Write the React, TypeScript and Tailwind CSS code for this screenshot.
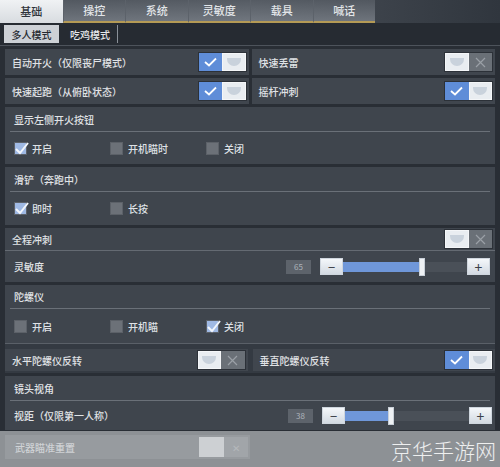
import React from 'react';

const font = { fontFamily: '"Noto Sans CJK SC", "Noto Sans", sans-serif' };

function Toggle({ on, faded }: { on: boolean; faded?: boolean }) {
  return (
    <div className={`flex h-[20px] w-[49px] border border-[#2c3138] ${faded ? 'opacity-40' : ''}`}>
      {on ? (
        <>
          <div className="flex w-1/2 items-center justify-center bg-[#5f8dd8]">
            <svg width="13" height="10" viewBox="0 0 13 10">
              <path d="M1 5 L5 8.5 L12 1.5" fill="none" stroke="#fff" strokeWidth="1.8" />
            </svg>
          </div>
          <Knob />
        </>
      ) : (
        <>
          <Knob />
          <div className="flex w-1/2 items-center justify-center bg-[#6a7077]">
            <svg width="11" height="11" viewBox="0 0 11 11">
              <path d="M1 1 L10 10 M10 1 L1 10" stroke="#9aa0a6" strokeWidth="1.2" />
            </svg>
          </div>
        </>
      )}
    </div>
  );
}

function Knob() {
  return (
    <div className="flex w-1/2 items-center justify-center border border-[#f4f6f8] bg-[#e9edf1]">
      <div className="h-[8px] w-[14px] rounded-b-full bg-[#c9d2dc]" />
    </div>
  );
}

function Check({ on, label }: { on: boolean; label: string }) {
  return (
    <div className="flex w-[96px] items-center gap-[5px] pl-[9px]">
      <div className="relative h-[13px] w-[13px] border border-[#5c6168] bg-[#6c7178]">
        {on && (
          <>
            <div className="absolute inset-0 bg-[#9fb9e4]" />
            <svg className="absolute -left-[1px] -top-[2px]" width="16" height="15" viewBox="0 0 16 15">
              <path d="M2 8 L6 12 L14 2" fill="none" stroke="#f2f6fc" strokeWidth="2" />
            </svg>
          </>
        )}
      </div>
      <span className="text-[10px] font-medium text-[#dfe2e6]">{label}</span>
    </div>
  );
}

function ToggleCell({ label, on }: { label: string; on: boolean }) {
  return (
    <div className="flex flex-1 items-center justify-between bg-[#40464e] pl-[7px] pr-[2px]">
      <span className="text-[10px] font-medium text-[#e0e3e6]">{label}</span>
      <Toggle on={on} />
    </div>
  );
}

function Slider({ value, pct }: { value: number; pct: number }) {
  return (
    <div className="flex items-center">
      <div className="mr-[9px] flex h-[14px] w-[25px] items-center justify-center bg-[#5d636b] text-[8px] text-[#aeb4bb]">
        {value}
      </div>
      <div className="flex h-[17px] w-[23px] items-center justify-center border border-[#cfd6de] bg-gradient-to-b from-[#f4f7fa] to-[#d3dae2] text-[13px] leading-none text-[#3b4048]">
        −
      </div>
      <div className="relative h-[10px] w-[124px] bg-[#4a5058]">
        <div className="absolute inset-y-0 left-0 bg-[#6f97d9]" style={{ width: `${pct}%` }} />
        <div
          className="absolute -top-[4px] h-[18px] w-[6px] border border-[#c9d0d8] bg-[#eef1f4]"
          style={{ left: `calc(${pct}% - 3px)` }}
        />
      </div>
      <div className="flex h-[17px] w-[23px] items-center justify-center border border-[#cfd6de] bg-gradient-to-b from-[#f4f7fa] to-[#d3dae2] text-[14px] leading-none text-[#3b4048]">
        +
      </div>
    </div>
  );
}

function Line() {
  return <div className="mx-[5px] h-px bg-[#6a7078]" />;
}

export default function App() {
  const tabs = ['基础', '操控', '系统', '灵敏度', '载具', '喊话'];
  return (
    <div className="relative h-[467px] w-[500px] overflow-hidden bg-[#292e35]" style={font}>
      {/* top tabs */}
      <div className="flex h-[23px] bg-gradient-to-r from-[#3d434b] via-[#4a5058] to-[#30363e]">
        {tabs.map((t, i) => (
          <div
            key={t}
            className={`flex w-[62.5px] items-center justify-center text-[11px] font-medium ${
              i === 0
                ? 'bg-gradient-to-b from-[#f0f2f4] to-[#d8dce0] text-[#2e333a]'
                : 'border-b-2 border-l border-[#b49a55] border-l-[#5c626a] bg-gradient-to-b from-[#5a6068]/70 to-[#7a8088]/80 text-[#e2e5e8]'
            }`}
          >
            {t}
          </div>
        ))}
      </div>

      {/* sub tabs */}
      <div className="flex h-[23px] items-center gap-[4px] border-b border-[#4d535b] bg-[#262b32] pl-[4px]">
        <div className="flex h-[18px] w-[55px] items-center justify-center bg-[#cdd1d6] text-[10px] font-medium text-[#262a30]">
          多人模式
        </div>
        <div className="flex h-[18px] w-[55px] items-center justify-center border-r border-[#8a9098] text-[10px] font-medium text-[#e6e8eb]">
          吃鸡模式
        </div>
      </div>

      <div className="flex flex-col gap-[3px] px-[5px] pt-[3px]">
        <div className="flex h-[26px] gap-[3px]">
          <ToggleCell label="自动开火（仅限丧尸模式）" on />
          <ToggleCell label="快速丢雷" on={false} />
        </div>
        <div className="flex h-[26px] gap-[3px]">
          <ToggleCell label="快速起跑（从俯卧状态）" on />
          <ToggleCell label="摇杆冲刺" on />
        </div>

        <div className="bg-[#3f454d]">
          <div className="flex h-[24px] items-center pl-[9px] text-[10px] font-medium text-[#e0e3e6]">显示左侧开火按钮</div>
          <Line />
          <div className="flex h-[32px] items-center">
            <Check on label="开启" />
            <Check on={false} label="开机瞄时" />
            <Check on={false} label="关闭" />
          </div>
        </div>

        <div className="bg-[#3f454d]">
          <div className="flex h-[24px] items-center pl-[9px] text-[10px] font-medium text-[#e0e3e6]">滑铲（奔跑中）</div>
          <Line />
          <div className="flex h-[33px] items-center">
            <Check on label="即时" />
            <Check on={false} label="长按" />
          </div>
        </div>

        <div className="bg-[#3f454d]">
          <div className="flex h-[22px] items-center justify-between pl-[7px] pr-[2px]">
            <span className="text-[10px] font-medium text-[#e0e3e6]">全程冲刺</span>
            <Toggle on={false} />
          </div>
          <div className="h-px bg-[#646a72]" />
          <div className="flex h-[31px] items-center justify-between pl-[9px] pr-[5px]">
            <span className="text-[10px] font-medium text-[#e0e3e6]">灵敏度</span>
            <Slider value={65} pct={64} />
          </div>
        </div>

        <div className="bg-[#3f454d]">
          <div className="flex h-[23px] items-center pl-[9px] text-[10px] font-medium text-[#e0e3e6]">陀螺仪</div>
          <Line />
          <div className="flex h-[34px] items-center">
            <Check on={false} label="开启" />
            <Check on={false} label="开机瞄" />
            <Check on label="关闭" />
          </div>
          <div className="h-px bg-[#5a6068]" />
          <div className="flex h-[29px] gap-[5px] bg-[#343a42] pb-[2px] pt-[5px]">
            <ToggleCell label="水平陀螺仪反转" on={false} />
            <ToggleCell label="垂直陀螺仪反转" on />
          </div>
        </div>

        <div className="bg-[#3f454d]">
          <div className="flex h-[24px] items-center pl-[9px] text-[10px] font-medium text-[#e0e3e6]">镜头视角</div>
          <Line />
          <div className="flex h-[29px] items-center justify-between pl-[9px] pr-[3px]">
            <span className="text-[10px] font-medium text-[#e0e3e6]">视距（仅限第一人称）</span>
            <Slider value={38} pct={37} />
          </div>
        </div>
      </div>

      {/* faded bottom band */}
      <div className="absolute inset-x-0 bottom-0 flex h-[36px] items-start bg-[#8d9195] px-[5px] pt-[4px]">
        <div className="flex h-[24px] w-[245px] items-center justify-between bg-[#979b9f] pl-[10px] pr-[2px]">
          <span className="text-[10px] font-medium text-[#cfd2d5]">武器瞄准重置</span>
          <div className="flex h-[20px] w-[49px] opacity-60">
            <div className="w-1/2 bg-[#f2f4f6]" />
            <div className="flex w-1/2 items-center justify-center bg-[#a9adb1] text-[10px] text-[#c8cbce]">✕</div>
          </div>
        </div>
      </div>
      <div className="absolute bottom-[4px] right-[4px] text-[21px] font-light leading-tight text-white/85">
        京华手游网
      </div>
    </div>
  );
}
